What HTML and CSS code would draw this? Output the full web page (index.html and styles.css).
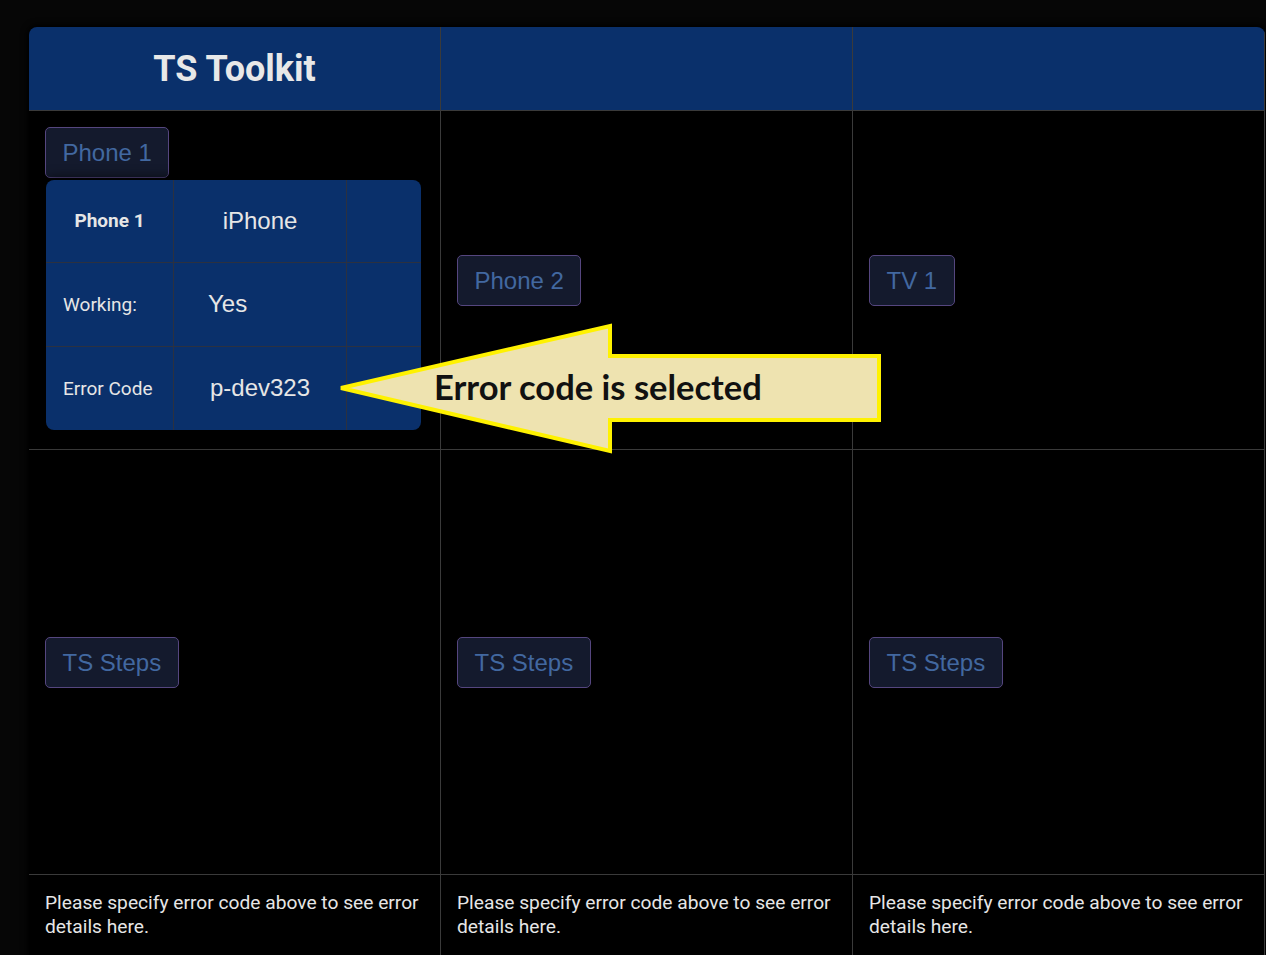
FILE: index.html
```html
<!DOCTYPE html>
<html lang="en">
<head>
<meta charset="utf-8">
<title>TS Toolkit</title>
<link rel="stylesheet" href="styles.css">
</head>
<body>
<div class="page">
  <div class="board">
    <div class="cell head"><h1 class="title">TS Toolkit</h1></div>
    <div class="cell head"></div>
    <div class="cell head"></div>

    <div class="cell device">
      <button class="chip">Phone 1</button>
      <div class="info">
        <div class="info-cell label strong">Phone 1</div>
        <div class="info-cell value center">iPhone</div>
        <div class="info-cell extra"></div>
        <div class="info-cell label">Working:</div>
        <div class="info-cell value indent">Yes</div>
        <div class="info-cell extra"></div>
        <div class="info-cell label last">Error Code</div>
        <div class="info-cell value center last">p-dev323</div>
        <div class="info-cell extra last"></div>
      </div>
    </div>
    <div class="cell device"><button class="chip">Phone 2</button></div>
    <div class="cell device"><button class="chip">TV 1</button></div>

    <div class="cell device"><button class="chip">TS Steps</button></div>
    <div class="cell device"><button class="chip">TS Steps</button></div>
    <div class="cell device"><button class="chip">TS Steps</button></div>

    <div class="cell note">Please specify error code above to see error details here.</div>
    <div class="cell note">Please specify error code above to see error details here.</div>
    <div class="cell note">Please specify error code above to see error details here.</div>
  </div>

  <div class="callout">
    <svg class="callout-shape" width="545" height="132" viewBox="0 0 545 132" aria-hidden="true">
      <polygon points="3,65 272,3 272,33 541,33 541,97 272,97 272,128" fill="#eee3b0" stroke="#fff200" stroke-width="4" stroke-linejoin="miter"/>
    </svg>
    <span class="callout-text">Error code is selected</span>
  </div>
</div>
</body>
</html>
```

FILE: styles.css
```css
* { box-sizing: border-box; }

html, body {
  margin: 0;
  padding: 0;
  background: #060606;
  width: 1266px;
  height: 955px;
  overflow: hidden;
}

.page {
  position: relative;
  padding: 27px 0 0 29px;
  font-family: Roboto, "Liberation Sans", sans-serif;
  color: #e6e6e6;
}

.board {
  display: grid;
  grid-template-columns: repeat(3, 412px);
  grid-template-rows: 84px 339px 425px 81px;
  width: 1236px;
  background: #000;
  border-radius: 8px 8px 0 0;
  overflow: hidden;
  box-shadow: 0 0 6px 2px #000;
}

.cell {
  border-right: 1px solid #3a3a3a;
  border-bottom: 1px solid #3a3a3a;
}

.head {
  background: #0a306b;
  display: flex;
  align-items: center;
  justify-content: center;
}

.title {
  margin: 0;
  font-family: Roboto, sans-serif;
  font-weight: 700;
  font-size: 36px;
  color: #e8e8e8;
  line-height: 1;
}

.device {
  display: flex;
  flex-direction: column;
  justify-content: center;
  align-items: flex-start;
  padding: 0 16px;
}

.chip {
  font-family: "Liberation Sans", Arial, sans-serif;
  font-size: 24px;
  line-height: 27px;
  padding: 11px 16.5px;
  color: #4268a0;
  background: #141a2d;
  border: 1px solid #55467f;
  border-radius: 5px;
  margin: 0;
}

.info {
  margin: 2px 0 4px 1px;
  display: grid;
  grid-template-columns: 128px 173px 74px;
  grid-template-rows: 83px 84px 83px;
  width: 375px;
  background: #0a306b;
  border-radius: 8px;
  box-shadow: 0 4px 14px 4px rgba(0, 0, 0, 0.9);
  overflow: hidden;
}

.info-cell {
  display: flex;
  align-items: center;
  border-right: 1px solid #2c3140;
  border-bottom: 1px solid #2c3140;
  color: #e6e6e6;
}

.info-cell.last { border-bottom: none; }
.info-cell.extra { border-right: none; }

.label {
  font-family: Roboto, sans-serif;
  font-size: 19px;
  padding-left: 17px;
}

.label.strong {
  font-weight: 700;
  font-size: 19px;
  justify-content: center;
  padding-left: 0;
}

.value {
  font-family: "Liberation Sans", Arial, sans-serif;
  font-size: 24px;
}

.value.center { justify-content: center; }
.value.indent { padding-left: 34px; }

.note {
  padding: 16px 16px 0 16px;
  font-family: Roboto, sans-serif;
  font-size: 19.2px;
  line-height: 24px;
  color: #e6e6e6;
}

.callout {
  position: absolute;
  left: 338px;
  top: 323px;
  width: 545px;
  height: 132px;
}

.callout-shape {
  position: absolute;
  left: 0;
  top: 0;
  display: block;
}

.callout-text {
  position: absolute;
  left: 96px;
  top: 44px;
  font-family: Lato, "Open Sans", sans-serif;
  font-weight: 700;
  font-size: 34.5px;
  line-height: 40px;
  color: #111;
  white-space: nowrap;
}
```
